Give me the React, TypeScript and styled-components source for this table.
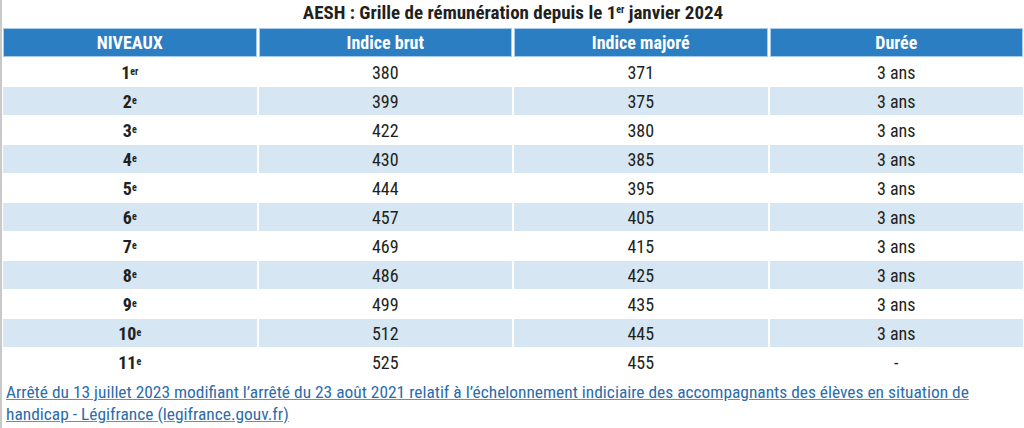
import React from 'react';
import styled, { createGlobalStyle } from 'styled-components';

const GlobalStyle = createGlobalStyle`
  html, body {
    margin: 0;
    padding: 0;
    background: #ffffff;
  }
  body {
    font-family: "Liberation Sans Narrow", "Roboto Condensed", "DejaVu Sans Condensed", Roboto, sans-serif;
    color: #231f20;
  }
`;

type Level = { n: string; sup: string; brut: string; majore: string; duree: string };

const levels: Level[] = [
  { n: '1', sup: 'er', brut: '380', majore: '371', duree: '3 ans' },
  { n: '2', sup: 'e', brut: '399', majore: '375', duree: '3 ans' },
  { n: '3', sup: 'e', brut: '422', majore: '380', duree: '3 ans' },
  { n: '4', sup: 'e', brut: '430', majore: '385', duree: '3 ans' },
  { n: '5', sup: 'e', brut: '444', majore: '395', duree: '3 ans' },
  { n: '6', sup: 'e', brut: '457', majore: '405', duree: '3 ans' },
  { n: '7', sup: 'e', brut: '469', majore: '415', duree: '3 ans' },
  { n: '8', sup: 'e', brut: '486', majore: '425', duree: '3 ans' },
  { n: '9', sup: 'e', brut: '499', majore: '435', duree: '3 ans' },
  { n: '10', sup: 'e', brut: '512', majore: '445', duree: '3 ans' },
  { n: '11', sup: 'e', brut: '525', majore: '455', duree: '-' },
];

const App = () => {
  return (
    <>
      <GlobalStyle />
      <Page>
        <Title>
          AESH : Grille de rémunération depuis le 1<Sup>er</Sup> janvier 2024
        </Title>
        <Table>
          <HeadRow>
            <HeadCell>NIVEAUX</HeadCell>
            <HeadCell>Indice brut</HeadCell>
            <HeadCell>Indice majoré</HeadCell>
            <HeadCell>Durée</HeadCell>
          </HeadRow>
          {levels.map((l, i) => (
            <Row key={l.n} $shaded={i % 2 === 1}>
              <Cell $bold>
                {l.n}
                <Sup>{l.sup}</Sup>
              </Cell>
              <Cell>{l.brut}</Cell>
              <Cell>{l.majore}</Cell>
              <Cell>{l.duree}</Cell>
            </Row>
          ))}
        </Table>
        <Source href="#">
          Arrêté du 13 juillet 2023 modifiant l’arrêté du 23 août 2021 relatif à l’échelonnement indiciaire des
          accompagnants des élèves en situation de handicap - Légifrance (legifrance.gouv.fr)
        </Source>
      </Page>
    </>
  );
};

export default App;

const Page = styled.div`
  height: 428px;
  box-sizing: border-box;
  border-left: 2px solid #c9c9c9;
  padding: 0 1px 0 1px;
  overflow: hidden;
`;

const Title = styled.div`
  height: 27px;
  line-height: 25px;
  text-align: center;
  font-weight: bold;
  font-size: 19px;
  color: #231f20;
`;

const Sup = styled.sup`
  font-size: 10px;
  font-weight: bold;
  vertical-align: 6px;
  line-height: 0;
`;

const Table = styled.div`
  display: flex;
  flex-direction: column;
`;

const HeadRow = styled.div`
  display: grid;
  grid-template-columns: repeat(4, 1fr);
  column-gap: 2px;
  padding-top: 1px;
  height: 30px;
  box-sizing: border-box;
`;

const HeadCell = styled.div`
  background: #2c7ec2;
  border: 1px solid #a8cdec;
  color: #ffffff;
  font-weight: bold;
  font-size: 18px;
  display: flex;
  align-items: center;
  justify-content: center;
`;

const Row = styled.div<{ $shaded?: boolean }>`
  display: grid;
  grid-template-columns: repeat(4, 1fr);
  column-gap: 2px;
  height: 29px;
  padding: 1px 0 0;
  box-sizing: border-box;
  & > div {
    background: ${(p) => (p.$shaded ? '#d6e6f3' : '#ffffff')};
  }
`;

const Cell = styled.div<{ $bold?: boolean }>`
  display: flex;
  align-items: center;
  justify-content: center;
  font-size: 18px;
  font-weight: ${(p) => (p.$bold ? 'bold' : 'normal')};
  color: #231f20;
`;

const Source = styled.a`
  display: block;
  margin-top: 5px;
  padding-left: 3px;
  padding-right: 40px;
  font-size: 17.4px;
  line-height: 22px;
  color: #2b6cab;
  text-decoration: underline;
  text-decoration-color: #5b93c9;
`;
